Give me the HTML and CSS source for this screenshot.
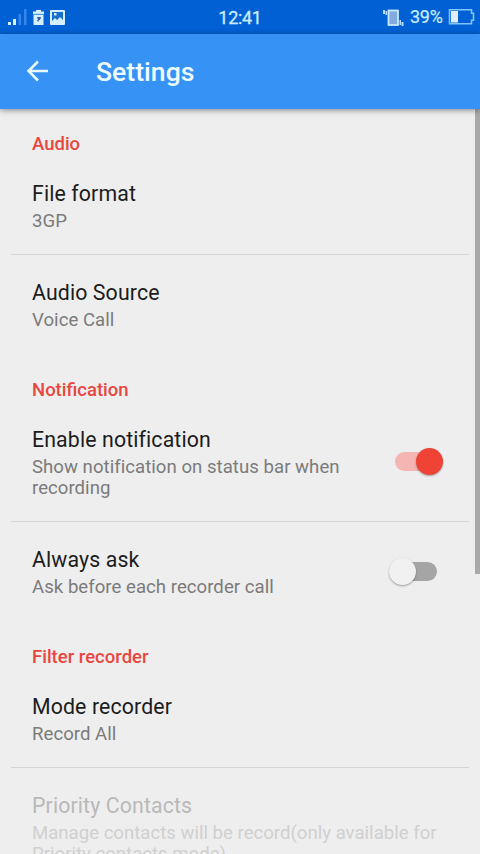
FILE: index.html
```
<!DOCTYPE html>
<html lang="en">
<head>
<meta charset="utf-8">
<title>Settings</title>
<link rel="stylesheet" href="styles.css">
</head>
<body>
<div class="screen">
  <div class="status">
    <svg class="status-left" width="70" height="34" viewBox="0 0 70 34">
      <path fill="#d5f4ff" d="M8 21h3v3H8zM13 18h3v6h-3z"/>
      <path fill="#3487e8" d="M18.500 13h2.500v11h-2.500zM24 8h2.500v16H24z"/>
      <path fill="#d5efff" d="M36 9h5v1.500h3V13H33v-2.500h3zM33.500 13.500h10v10.500h-10z"/>
      <path fill="#3559a8" d="M37 16h4l-1 3h-1l-1 2-1-2h1z"/>
      <path fill="#4a8fdc" d="M34.500 12.800h8v.9h-8z"/>
      <rect x="50" y="9" width="15" height="15" rx="1" fill="#d5efff"/>
      <path fill="#1770cd" d="M52 11h11v8l-3-3-3 3-2-2-3 3z"/>
      <path fill="#d5efff" d="M54 12h2.500v2.500H54z"/>
    </svg>
    <span class="clock">12:41</span>
    <div class="status-right">
      <svg width="24" height="34" viewBox="0 0 24 34">
        <path fill="#b5dcff" d="M1 9h2v4H1zM3.500 10H5v4H3.500zM17.500 19h1.500v5h-1.500zM19.500 21h2v4h-2z"/>
        <rect x="6.500" y="9.500" width="9.500" height="14.500" fill="#82aae0" stroke="#c8eaff" stroke-width="1.800"/>
      </svg>
      <span class="percent">39%</span>
      <svg width="27" height="34" viewBox="0 0 27 34">
        <path fill="none" stroke="#83c3fa" stroke-width="1.600" d="M1.500 8.800h22v3.400h2v7h-2v3.500h-22z"/>
        <path fill="#e1eeff" d="M3 10h7v11.500H3z"/>
      </svg>
    </div>
  </div>
  <header class="appbar">
    <svg class="back" width="24" height="24" viewBox="0 0 24 24"><path fill="none" stroke="#e8fbff" stroke-width="2.500" d="M23 12H3.500M13 2.500 3.500 12l9.500 9.500"/></svg>
    <h1>Settings</h1>
  </header>
  <main class="list">
    <h2>Audio</h2>
    <section class="item"><div class="text"><h3>File format</h3><p>3GP</p></div></section>
    <hr>
    <section class="item"><div class="text"><h3>Audio Source</h3><p>Voice Call</p></div></section>
    <h2>Notification</h2>
    <section class="item"><div class="text narrow"><h3>Enable notification</h3><p>Show notification on status bar when recording</p></div><div class="switch on"></div></section>
    <hr>
    <section class="item"><div class="text narrow"><h3>Always ask</h3><p>Ask before each recorder call</p></div><div class="switch"></div></section>
    <h2>Filter recorder</h2>
    <section class="item"><div class="text"><h3>Mode recorder</h3><p>Record All</p></div></section>
    <hr>
    <section class="item disabled"><div class="text"><h3>Priority Contacts</h3><p>Manage contacts will be record(only available for Priority contacts mode)</p></div></section>
    <div class="scrollbar"></div>
  </main>
</div>
</body>
</html>
```
FILE: styles.css
```
* { box-sizing: border-box; margin: 0; padding: 0; }
body { font-family: Roboto, "Liberation Sans", sans-serif; background: #eee; overflow: hidden; }
svg { display: block; }
.screen { width: 480px; height: 854px; overflow: hidden; display: flex; flex-direction: column; }
.status {
  height: 34px; flex: none; background: #0160d4; color: #c9edff;
  display: grid; grid-template-columns: 1fr auto 1fr; align-items: center;
}
.clock { font-size: 18px; line-height: 34px; padding-top: 1px; letter-spacing: -0.3px; -webkit-text-stroke: 0.3px; }
.status-right { display: flex; justify-content: flex-end; align-items: center; padding-right: 5px; }
.percent { font-size: 18px; margin: 0 5px 0 4px; padding-bottom: 2px; width: 33px; letter-spacing: -0.3px; -webkit-text-stroke: 0.2px; }
.appbar {
  height: 75px; flex: none; background: #3792f6; color: #ecfcff; position: relative; z-index: 1;
  display: flex; align-items: center; padding-left: 25px;
  box-shadow: 0 1px 6px rgba(0, 0, 0, .45);
}
.back { margin: 0 47px 1px 0; }
.appbar h1 { font-size: 26.600px; font-weight: 500; line-height: 32px; }
.list { flex: 1; min-height: 0; position: relative; overflow: hidden; background: #eee; }
h2 { font-size: 18.500px; font-weight: 500; line-height: 22px; padding: 24px 32px 1px; color: #e8473f; }
.item { display: flex; align-items: center; padding: 25px 32px 21.500px; }
.item + h2 { padding-top: 25.500px; }
.text { flex: 1; }
.text.narrow { flex: none; width: 330px; }
h3 { font-size: 21.300px; font-weight: 400; line-height: 25px; letter-spacing: 0.120px; color: #1c1c1c; }
p { font-size: 18.600px; line-height: 21.500px; margin-top: 5px; letter-spacing: 0.030px; color: #7b7b7b; }
hr { border: 0; height: 1px; margin: 0 11px; background: #d4d4d4; }
.disabled h3 { color: #b9b9b9; }
.disabled p { color: #d0d0d0; margin-right: -20px; letter-spacing: 0; }
.switch {
  width: 42px; height: 19px; border-radius: 10px; margin: 0 0 3px 33px;
  background: #a5a5a5;
  position: relative;
}
.switch::after {
  content: ""; position: absolute; left: -6px; top: -4px; width: 27px; height: 27px; border-radius: 50%;
  background: #f1f1f1; box-shadow: 0 1px 2px rgba(0, 0, 0, .35);
}
.switch.on { background: #f4b5b3; }
.switch.on::after { left: 21px; background: #ef4336; }
.scrollbar { position: absolute; right: 0; top: 0; width: 5px; height: 465px; background: #a9a9a9; }
```
